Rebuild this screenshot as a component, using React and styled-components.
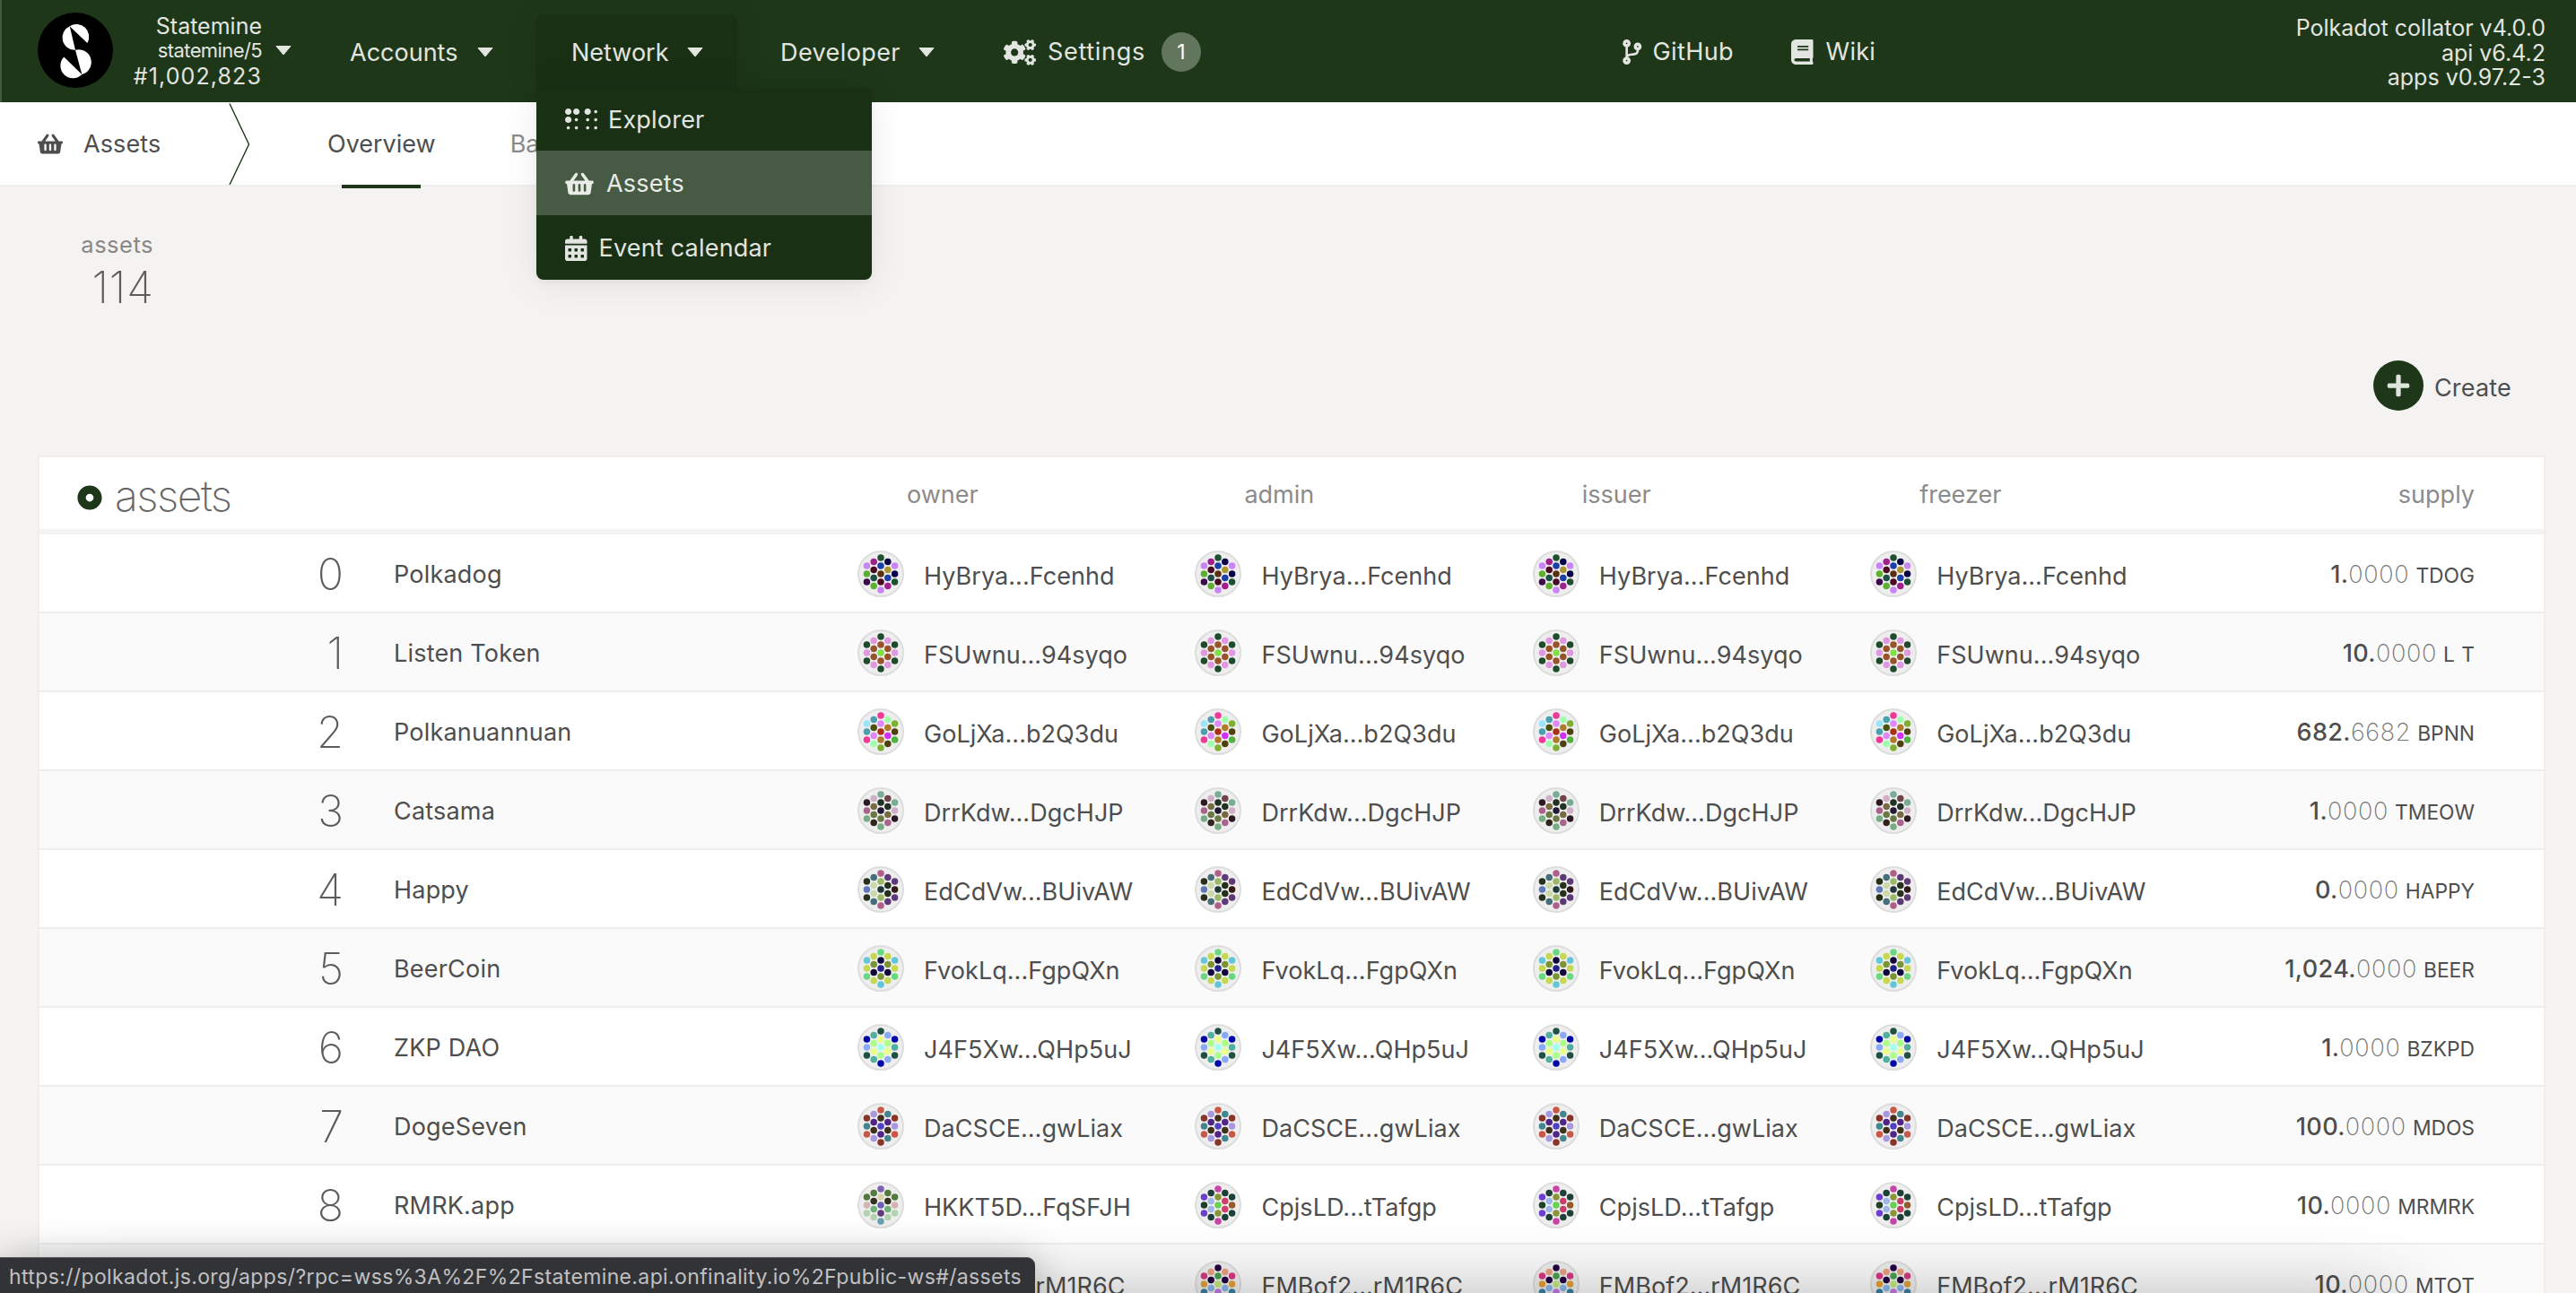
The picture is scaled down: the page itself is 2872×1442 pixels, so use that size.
import React from "react";
import styled, { createGlobalStyle } from "styled-components";
import {
  FaShoppingBasket,
  FaCalendarAlt,
  FaCogs,
  FaCodeBranch,
  FaBook,
  FaBraille,
  FaPlus,
  FaDotCircle,
} from "react-icons/fa";

const GlobalStyle = createGlobalStyle`
  * { box-sizing: border-box; }
  html, body { margin: 0; padding: 0; overflow: hidden; }
  body {
    background: #f4f3f1;
    color: #4e4e4e;
    font-family: Inter, "Liberation Sans", sans-serif;
    font-size: 27px;
    line-height: 34px;
  }
  svg { display: block; flex: none; }
`;

const Page = styled.div`
  position: relative;
  display: flex;
  flex-direction: column;
  width: 2872px;
  height: 1442px;
  overflow: hidden;
  background: #f4f3f1;
`;

const Glyph = styled.span`
  display: flex;
  flex: none;
  svg {
    width: ${(p) => p.$width || 28}px;
    height: ${(p) => p.$height || 28}px;
  }
`;

/* ---------- top bar ---------- */

const TopBar = styled.header`
  display: flex;
  align-items: stretch;
  height: 114px;
  padding: 0 34px 0 42px;
  background: #1e3718;
  color: #e2e5e0;
  box-shadow: inset 2px 0 0 #445a40;
  position: relative;
  z-index: 2;
`;

const Chain = styled.div`
  display: flex;
  align-items: center;
  width: 309px;
  padding-bottom: 2px;
`;

const ChainInfo = styled.div`
  display: flex;
  flex-direction: column;
  align-items: flex-end;
  width: 166px;
  margin-right: 15px;
  padding-top: 3px;
`;

const InfoLine = styled.div`
  font-size: ${(p) => (p.$small ? 22 : 25)}px;
  line-height: ${(p) => p.$height || 28}px;
  letter-spacing: ${(p) => p.$track || 0}px;
  white-space: nowrap;
`;

const MainNav = styled.nav`
  display: flex;
  align-items: stretch;
`;

const NavItem = styled.div`
  position: relative;
  display: flex;
  align-items: center;
  justify-content: space-between;
  width: ${(p) => p.$width}px;
  height: ${(p) => (p.$open ? 82 : 114)}px;
  margin: ${(p) => (p.$open ? "16px 9px 0 10px" : "0")};
  padding: 3px 38px 0 39px;
  background: ${(p) => (p.$open ? "#1a3015" : "transparent")};
  border-radius: 8px 8px 0 0;
  box-shadow: ${(p) => (p.$open ? "0 0 44px rgba(0, 0, 0, 0.06)" : "none")};
`;

const Label = styled.span`
  white-space: nowrap;
  letter-spacing: ${(p) => p.$track || 0}px;
`;

const Badge = styled.span`
  display: flex;
  align-items: center;
  justify-content: center;
  width: 44px;
  height: 44px;
  margin-left: 18px;
  border-radius: 50%;
  background: #62765d;
  color: #fff;
  font-size: 23px;
`;

const SettingsLink = styled.div`
  display: flex;
  align-items: center;
  width: 729px;
  padding: 2px 0 0 39px;
`;

const ExternalLinks = styled.div`
  display: flex;
  align-items: center;
  padding-top: 2px;
`;

const IconText = styled.div`
  display: flex;
  align-items: center;
  gap: ${(p) => p.$gap}px;
  width: ${(p) => (p.$width ? p.$width + "px" : "auto")};
`;

const Versions = styled.div`
  display: flex;
  flex-direction: column;
  align-items: flex-end;
  margin-left: auto;
  padding-top: 17px;
`;

const Menu = styled.div`
  position: absolute;
  top: 82px;
  left: 0;
  width: 374px;
  height: 214px;
  overflow: hidden;
  background: #1a3015;
  border-radius: 0 8px 8px 8px;
`;

const MenuShadow = styled.div`
  position: absolute;
  top: 82px;
  left: 0;
  width: 374px;
  height: 214px;
  border-radius: 8px;
  box-shadow: 0 4px 44px rgba(0, 0, 0, 0.08), 0 2px 6px rgba(0, 0, 0, 0.06);
`;

const MenuItem = styled.div`
  display: flex;
  align-items: center;
  gap: ${(p) => p.$gap}px;
  height: ${(p) => p.$height}px;
  padding: 1px 32px 0;
  letter-spacing: 0.2px;
  background: ${(p) => (p.$active ? "#475a43" : "transparent")};
  color: ${(p) => (p.$active ? "#e8ebe6" : "#e1e4df")};
`;

/* ---------- tabs ---------- */

const TabBar = styled.div`
  display: flex;
  align-items: stretch;
  height: 94px;
  padding-left: 42px;
  background: #fff;
  border-bottom: 2px solid #eeeeed;
`;

const Section = styled.div`
  display: flex;
  align-items: center;
  gap: 23px;
  width: 213px;
  padding-top: 1px;
  letter-spacing: 0.1px;
`;

const Tab = styled.div`
  display: flex;
  flex-direction: column;
  align-items: center;
  height: 96px;
  padding-top: 30px;
  margin-left: ${(p) => p.$offset}px;
  color: ${(p) => (p.$active ? "#4e4e4e" : "#8b8b8b")};
  &::after {
    content: "";
    width: 88px;
    height: 4px;
    margin-top: auto;
    background: ${(p) => (p.$active ? "#1e3718" : "transparent")};
  }
`;

/* ---------- content ---------- */

const Summary = styled.div`
  display: flex;
  flex-direction: column;
  align-items: flex-end;
  width: 171px;
  padding-top: 48px;
`;

const SummaryLabel = styled.div`
  color: #888886;
  font-size: 25.5px;
  letter-spacing: 0.5px;
`;

const SummaryValue = styled.div`
  margin-top: 5px;
  color: #5c5c5c;
  font-size: 48.5px;
  font-weight: 200;
  line-height: 52px;
  letter-spacing: 1px;
  margin-right: -1px;
`;

const Actions = styled.div`
  display: flex;
  justify-content: flex-end;
  align-items: center;
  gap: 12px;
  height: 56px;
  margin-top: 55px;
  padding-right: 72px;
`;

const ActionLabel = styled.span`
  padding-top: 5px;
  letter-spacing: 0.2px;
`;

const RoundButton = styled.span`
  display: flex;
  align-items: center;
  justify-content: center;
  width: 56px;
  height: 56px;
  border-radius: 50%;
  background: #1e3718;
  color: #dfe4dd;
`;

const Table = styled.div`
  width: 2796px;
  margin: 50px 0 0 42px;
  border: 2px solid #efeeed;
  border-bottom: 0;
`;

const columns = "340px 572px repeat(4, 376.4px) 1fr";

const HeaderRow = styled.div`
  display: grid;
  grid-template-columns: ${columns};
  align-items: center;
  height: 80px;
  margin-bottom: 6px;
  padding-top: 5px;
  background: #fff;
  color: #8b8b8b;
`;

const Title = styled.div`
  grid-column: span 2;
  display: flex;
  align-items: center;
  gap: 14px;
  padding: 4px 0 0 42px;
  color: #1e3718;
`;

const TitleText = styled.span`
  padding-bottom: 3px;
  color: #666;
  font-size: 48px;
  font-weight: 200;
  line-height: 60px;
  letter-spacing: -1.5px;
`;

const ColumnHead = styled.div`
  padding: ${(p) => (p.$end ? "0 77px 1px 0" : "0 0 1px 55px")};
  text-align: ${(p) => (p.$end ? "right" : "left")};
`;

const Row = styled.div`
  display: grid;
  grid-template-columns: ${columns};
  height: 88px;
  background: ${(p) => (p.$odd ? "#fafafa" : "#fff")};
  border-bottom: 2px solid #eee;
`;

const IndexCell = styled.div`
  display: flex;
  align-items: center;
  justify-content: flex-end;
  padding: 4px 1px 0 0;
  color: #5c5c5c;
  font-size: 48.5px;
  font-weight: 200;
`;

const NameCell = styled.div`
  display: flex;
  align-items: center;
  padding: 4px 0 0 55px;
  letter-spacing: 0.2px;
`;

const AddressCell = styled.div`
  display: flex;
  align-items: flex-start;
  gap: 22px;
  padding-top: 18px;
`;

const AddressText = styled.span`
  padding-top: 12px;
  letter-spacing: 0.05px;
  white-space: nowrap;
`;

const IdentRing = styled.span`
  display: flex;
  width: 52px;
  height: 52px;
  border: 2px solid #ddd;
  border-radius: 50%;
  background: #eee;
`;

const SupplyCell = styled.div`
  display: flex;
  align-items: baseline;
  justify-content: flex-end;
  padding: 28px 77px 0 0;
  white-space: nowrap;
`;

const Whole = styled.span`
  font-weight: 500;
  letter-spacing: 0.4px;
`;

const Decimals = styled.span`
  color: #747474;
  font-weight: 200;
  letter-spacing: 0.7px;
`;

const Unit = styled.span`
  margin-left: 7px;
  font-size: 22.8px;
  word-spacing: 1px;
`;

/* ---------- browser status bubble ---------- */

const BottomShade = styled.div`
  position: absolute;
  z-index: 3;
  left: 60px;
  top: 1462px;
  width: 2610px;
  height: 60px;
  box-shadow: 0 0 90px rgba(0, 0, 0, 0.42);
`;

const StatusBubble = styled.div`
  position: absolute;
  z-index: 4;
  left: 0;
  bottom: 0;
  display: flex;
  align-items: center;
  width: 1154px;
  height: 40px;
  padding: 2px 0 0 10px;
  border-top: 1px solid #57575a;
  border-top-right-radius: 9px;
  background: #323337;
  color: #c0c0c2;
  font-size: 23px;
  letter-spacing: 0.365px;
  white-space: nowrap;
  box-shadow: 0 4px 44px rgba(0, 0, 0, 0.3);
`;

const Caret = () => (
  <svg width="18" height="11" viewBox="0 0 18 11">
    <path d="M1 0.5h16L9 10z" fill="#e2e5e0" stroke="#e2e5e0" strokeLinejoin="round" />
  </svg>
);

const Logo = () => (
  <svg width="84" height="84" viewBox="0 0 84 84">
    <circle cx="42" cy="42" r="42" fill="#000" />
    <g fill="#fff">
      <path d="M35.7 15.3A13.8 13.8 0 0 0 42 41.7Z" />
      <path d="M35.7 15.3A13.9 13.9 0 0 1 55.3 34Z" />
      <path d="M42 41.7A13.9 13.9 0 0 1 49.3 69Z" />
      <path d="M49.3 69A13.9 13.9 0 0 1 29.3 49.6Z" />
    </g>
  </svg>
);

const Chevron = () => (
  <svg width="26" height="92" viewBox="0 0 26 92">
    <path d="M1 1.5 22.5 47 1 92" fill="none" stroke="#1e3718" strokeWidth="1.4" />
  </svg>
);

/* Dots of an identicon, column by column from left to right, top to bottom. */
const DX = (18 * Math.sqrt(3)) / 4;
const DOTS = [
  [-2 * DX, -9], [-2 * DX, 0], [-2 * DX, 9],
  [-DX, -13.5], [-DX, -4.5], [-DX, 4.5], [-DX, 13.5],
  [0, -18], [0, -9], [0, 0], [0, 9], [0, 18],
  [DX, -13.5], [DX, -4.5], [DX, 4.5], [DX, 13.5],
  [2 * DX, -9], [2 * DX, 0], [2 * DX, 9],
];

const Identicon = ({ colors }) => (
  <IdentRing>
    <svg width="48" height="48" viewBox="-24 -24 48 48">
      {DOTS.map(([x, y], i) => (
        <circle key={i} cx={x} cy={y} r="3.75" fill={"#" + colors[i]} />
      ))}
    </svg>
  </IdentRing>
);

const palette = (text) => text.split(" ");

const ICONS = {
  dog: palette("C985F5 5FB032 3A0A4A A02090 4A0A24 1F5046 5FB032 1F5030 1C40A8 5A3010 4A0A24 C985F5 0A0048 AA9530 1C40A8 A02090 C985F5 0A0048 1F5030"),
  listen: palette("1F4A2C E098E0 1F4A2C E098E0 99532A 99532A E098E0 1F4A2C 99532A 7FE04A 99532A 1F4A2C E098E0 99532A 99532A E098E0 1F4A2C E098E0 1F4A2C"),
  nuan: palette("98E5FA 4AA0B0 F03898 4AA0B0 4A5010 E088F8 A0FFAA F03898 E088F8 AA3018 B07A28 80B032 A0FFAA B07A28 D030F8 504010 80B032 504010 50B040"),
  cat: palette("2E1A22 A8648A 78AC84 D0B0C8 786A42 6A7844 30261A 78AC94 223222 221A32 6A7844 78AC84 704448 223222 786A42 A8648A 78AC94 D0B0C8 2E1A22"),
  happy: palette("26301A 5F7AB8 26301A 466E7A CADAA8 CADAA8 466E7A B06088 9CBA66 20383A 9CBA66 B06088 5E3A78 26301A 26301A 5E3A78 5E3A78 321A1A 5E3A78"),
  beer: palette("62C6D8 C6D850 6AD880 C6D850 7A9434 10083A C6D850 6AD880 10083A 22208A 7A9434 62C6D8 C6D850 7A9434 10083A C6D850 62C6D8 C6D850 6AD880"),
  zkp: palette("0008A8 88AAF8 205044 50B0A0 AAFF88 E8FF88 50B0A0 205044 E8FF88 A0FFEE AAFF88 0008A8 88AAF8 AAFF88 E8FF88 88AAF8 0008A8 50B0A0 205044"),
  doge: palette("883428 44868E C85848 A898E0 502488 40301A A898E0 C85848 40301A 5040C8 502488 883428 44868E 502488 40301A 44868E 883428 A898E0 C85848"),
  rmrkOwner: palette("527A3E D4B4B0 B0D4B0 527A3E 32321E 70B07A B0D4B0 8060B0 D8D0AA 6A60B0 603A78 68A0B0 527A3E 32321E 70B07A B0D4B0 527A3E D4B4B0 B0D4B0"),
  rmrk: palette("6A40CC 1F4024 6A40CC 1F4038 A0B8E8 A0B8E8 1F4038 C844A8 8A9438 6AD050 8A9438 C844A8 1F4038 C84068 C84068 1F4038 1F4038 945A28 1F4038"),
  mtot: palette("D83880 E0A038 3A80A0 E8A080 240040 88B8E8 C078E0 240040 48A050 C0E878 C078E0 240040 E8A080 240040 88B8E8 C078E0 D83880 E0A038 3A80A0"),
};

const same = (icon, address) => Array(4).fill({ icon, address });

const ASSETS = [
  { id: "0", name: "Polkadog", accounts: same("dog", "HyBrya...Fcenhd"), whole: "1.", rest: "0000", unit: "TDOG" },
  { id: "1", name: "Listen Token", accounts: same("listen", "FSUwnu...94syqo"), whole: "10.", rest: "0000", unit: "L T" },
  { id: "2", name: "Polkanuannuan", accounts: same("nuan", "GoLjXa...b2Q3du"), whole: "682.", rest: "6682", unit: "BPNN" },
  { id: "3", name: "Catsama", accounts: same("cat", "DrrKdw...DgcHJP"), whole: "1.", rest: "0000", unit: "TMEOW" },
  { id: "4", name: "Happy", accounts: same("happy", "EdCdVw...BUivAW"), whole: "0.", rest: "0000", unit: "HAPPY" },
  { id: "5", name: "BeerCoin", accounts: same("beer", "FvokLq...FgpQXn"), whole: "1,024.", rest: "0000", unit: "BEER" },
  { id: "6", name: "ZKP DAO", accounts: same("zkp", "J4F5Xw...QHp5uJ"), whole: "1.", rest: "0000", unit: "BZKPD" },
  { id: "7", name: "DogeSeven", accounts: same("doge", "DaCSCE...gwLiax"), whole: "100.", rest: "0000", unit: "MDOS" },
  {
    id: "8", name: "RMRK.app",
    accounts: [{ icon: "rmrkOwner", address: "HKKT5D...FqSFJH" }, ...same("rmrk", "CpjsLD...tTafgp").slice(1)],
    whole: "10.", rest: "0000", unit: "MRMRK",
  },
  { id: "", name: "", accounts: same("mtot", "FMBof2...rM1R6C"), whole: "10.", rest: "0000", unit: "MTOT" },
];

function NetworkMenu() {
  return (
    <Menu>
      <MenuItem $gap={12} $height={70}><Glyph $width={36} $height={29}><FaBraille /></Glyph>Explorer</MenuItem>
      <MenuItem $gap={14} $height={72} $active><Glyph $width={32}><FaShoppingBasket /></Glyph>Assets</MenuItem>
      <MenuItem $gap={13} $height={72}><Glyph $width={24.5}><FaCalendarAlt /></Glyph>Event calendar</MenuItem>
    </Menu>
  );
}

export default function App() {
  return (
    <Page>
      <GlobalStyle />
      <TopBar>
        <Chain>
          <Logo />
          <ChainInfo>
            <InfoLine>Statemine</InfoLine>
            <InfoLine $small $height={27} $track={-0.6}>statemine/5</InfoLine>
            <InfoLine $height={30} $track={1.1}>#1,002,823</InfoLine>
          </ChainInfo>
          <Caret />
        </Chain>
        <MainNav>
          <NavItem $width={237}><Label>Accounts</Label><Caret /></NavItem>
          <NavItem $width={224} $open>
            <MenuShadow />
            <Label>Network</Label><Caret />
            <NetworkMenu />
          </NavItem>
          <NavItem $width={249}><Label $track={0.4}>Developer</Label><Caret /></NavItem>
        </MainNav>
        <SettingsLink>
          <IconText $gap={13}><Glyph $width={36} $height={29}><FaCogs /></Glyph><Label $track={0.7}>Settings</Label></IconText>
          <Badge>1</Badge>
        </SettingsLink>
        <ExternalLinks>
          <IconText $gap={12} $width={188}><Glyph $width={21.5}><FaCodeBranch /></Glyph><Label $track={0.4}>GitHub</Label></IconText>
          <IconText $gap={14}><Glyph $width={24.5}><FaBook /></Glyph><Label $track={0.3}>Wiki</Label></IconText>
        </ExternalLinks>
        <Versions>
          <InfoLine>Polkadot collator v4.0.0</InfoLine>
          <InfoLine>api v6.4.2</InfoLine>
          <InfoLine $height={26}>apps v0.97.2-3</InfoLine>
        </Versions>
      </TopBar>
      <TabBar>
        <Section><Glyph $height={25}><FaShoppingBasket /></Glyph>Assets</Section>
        <Chevron />
        <Tab $active $offset={84}>Overview</Tab>
        <Tab $offset={83}>Balances</Tab>
      </TabBar>
      <Summary>
        <SummaryLabel>assets</SummaryLabel>
        <SummaryValue>114</SummaryValue>
      </Summary>
      <Actions>
        <RoundButton><Glyph><FaPlus /></Glyph></RoundButton>
        <ActionLabel>Create</ActionLabel>
      </Actions>
      <Table>
        <HeaderRow>
          <Title><Glyph><FaDotCircle /></Glyph><TitleText>assets</TitleText></Title>
          <ColumnHead>owner</ColumnHead>
          <ColumnHead>admin</ColumnHead>
          <ColumnHead>issuer</ColumnHead>
          <ColumnHead>freezer</ColumnHead>
          <ColumnHead $end>supply</ColumnHead>
        </HeaderRow>
        {ASSETS.map((asset, index) => (
          <Row key={index} $odd={index % 2 === 1}>
            <IndexCell>{asset.id}</IndexCell>
            <NameCell>{asset.name}</NameCell>
            {asset.accounts.map((account, i) => (
              <AddressCell key={i}>
                <Identicon colors={ICONS[account.icon]} />
                <AddressText>{account.address}</AddressText>
              </AddressCell>
            ))}
            <SupplyCell>
              <Whole>{asset.whole}</Whole>
              <Decimals>{asset.rest}</Decimals>
              <Unit>{asset.unit}</Unit>
            </SupplyCell>
          </Row>
        ))}
      </Table>
      <BottomShade />
      <StatusBubble>
        https://polkadot.js.org/apps/?rpc=wss%3A%2F%2Fstatemine.api.onfinality.io%2Fpublic-ws#/assets
      </StatusBubble>
    </Page>
  );
}
